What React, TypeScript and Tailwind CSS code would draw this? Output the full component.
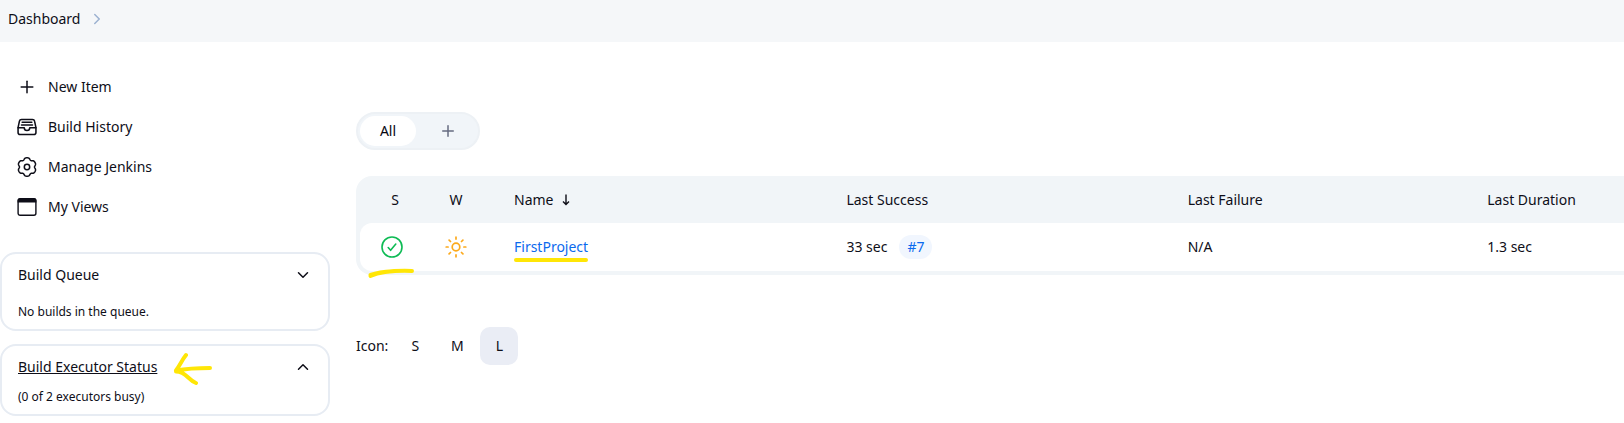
import type { ReactNode } from "react";
import { ChevronDown, ChevronRight, ChevronUp, Plus } from "lucide-react";
import { IoFileTrayFullOutline } from "react-icons/io5";

// Outline of a six-lobed gear: wide lobes with narrow notches between them.
const gearPoints = Array.from({ length: 120 }, (_, i) => {
  const t = (i / 120) * Math.PI * 2;
  const notch = (1 - Math.cos(6 * t)) / 2;
  const r = 9.2 - 1.7 * notch * notch;
  return `${(10 + r * Math.sin(t)).toFixed(2)},${(10 - r * Math.cos(t)).toFixed(2)}`;
}).join(" ");

function GearIcon() {
  return (
    <svg
      viewBox="0 0 20 20"
      className="size-5"
      fill="none"
      stroke="currentColor"
      strokeWidth="1.5"
      strokeLinejoin="round"
      aria-hidden="true"
    >
      <polygon points={gearPoints} />
      <circle cx="10" cy="10" r="2.7" />
    </svg>
  );
}

function WindowIcon() {
  return (
    <svg viewBox="0 0 20 20" className="size-5" fill="none" aria-hidden="true">
      <rect x="1.1" y="1.7" width="17.8" height="16.6" rx="2" stroke="currentColor" strokeWidth="1.4" />
      <path d="M.6 5.6V3.4A2.2 2.2 0 0 1 2.8 1.2h14.4A2.2 2.2 0 0 1 19.4 3.4v2.2Z" fill="currentColor" />
    </svg>
  );
}

function SuccessIcon() {
  return (
    <svg
      viewBox="0 0 24 24"
      className="size-6 text-[#0dbb54]"
      fill="none"
      stroke="currentColor"
      strokeWidth="1.6"
      strokeLinecap="round"
      strokeLinejoin="round"
      role="img"
      aria-label="Success"
    >
      <circle cx="12" cy="12" r="10" />
      <path d="m8.2 12.5 2.4 2.8 5.2-6.2" />
    </svg>
  );
}

function SunIcon() {
  return (
    <svg
      viewBox="0 0 24 24"
      className="size-6 text-[#fca91b]"
      fill="none"
      stroke="currentColor"
      strokeWidth="1.7"
      strokeLinecap="round"
      role="img"
      aria-label="100% stable"
    >
      <circle cx="12" cy="12" r="3.8" />
      <path d="M12 2.2v1.9M12 19.9v1.9M2.2 12h1.9M19.9 12h1.9M5.1 5.1l1.4 1.4M17.5 17.5l1.4 1.4M5.1 18.9l1.4-1.4M17.5 6.5l1.4-1.4" />
    </svg>
  );
}

function SortArrow() {
  return (
    <svg
      viewBox="0 0 8 12"
      className="h-3 w-2"
      fill="none"
      stroke="currentColor"
      strokeWidth="1.4"
      aria-hidden="true"
    >
      <path d="M4 .6v10M1 7.6l3 3 3-3" />
    </svg>
  );
}

function SideLink({ icon, children }: { icon: ReactNode; children: ReactNode }) {
  return (
    <a href="#" className="flex h-10 items-center gap-[10px] pl-4">
      <span className="flex w-[22px] items-center justify-center">{icon}</span>
      {children}
    </a>
  );
}

function Marker({ className, viewBox, d }: { className: string; viewBox: string; d: string }) {
  return (
    <svg
      className={`pointer-events-none absolute ${className}`}
      viewBox={viewBox}
      fill="none"
      stroke="#ffe606"
      strokeWidth="4"
      strokeLinecap="round"
      strokeLinejoin="round"
      aria-hidden="true"
    >
      <path d={d} />
    </svg>
  );
}

export default function App() {
  return (
    <div className="min-h-screen bg-white font-['Noto_Sans',sans-serif] text-sm leading-5 text-[#0e0e18]">
      <nav aria-label="Breadcrumb" className="flex h-[42px] items-center gap-2 bg-[#f5f7f9] px-2 pb-1">
        <a href="#">Dashboard</a>
        <ChevronRight className="size-[18px] text-[#9cb2d1]" />
      </nav>

      <div className="flex">
        <aside className="w-[330px] shrink-0 pt-[25px]">
          <nav aria-label="Tasks" className="mb-[25px]">
            <SideLink icon={<Plus className="size-5" strokeWidth={1.8} />}>New Item</SideLink>
            <SideLink icon={<IoFileTrayFullOutline className="size-[22px] [&_*]:stroke-[36px]" />}>
              Build History
            </SideLink>
            <SideLink icon={<GearIcon />}>Manage Jenkins</SideLink>
            <SideLink icon={<WindowIcon />}>My Views</SideLink>
          </nav>

          <section className="mb-[13px] rounded-2xl border-2 border-[#e7ecf3] px-4 pt-[11px] pb-2">
            <div className="flex items-center justify-between">
              <h2>Build Queue</h2>
              <button type="button" aria-label="Toggle build queue">
                <ChevronDown className="size-[18px]" />
              </button>
            </div>
            <p className="mt-[18px] text-xs leading-[18px]">No builds in the queue.</p>
          </section>

          <section className="rounded-2xl border-2 border-[#e7ecf3] px-4 pt-[11px] pb-2">
            <div className="flex items-center justify-between">
              <h2 className="relative">
                <a href="#" className="underline">
                  Build Executor Status
                </a>
                <Marker
                  className="top-[-6px] left-[154px] h-[34px] w-[42px]"
                  viewBox="0 0 42 34"
                  d="M14 4C10 9 8 14 4 19.5C15 17.5 26 17 38 17M4 20.5C14 20.5 16 29 24 32"
                />
              </h2>
              <button type="button" aria-label="Toggle executor status">
                <ChevronUp className="size-[18px]" />
              </button>
            </div>
            <p className="mt-[11px] text-xs leading-[18px]">(0 of 2 executors busy)</p>
          </section>
        </aside>

        <main className="min-w-0 flex-1 pt-[70px] pl-[26px]">
          <div className="flex h-[38px] w-[124px] rounded-full border-2 border-[#edf1f5] bg-[#f1f5f9] p-[2px]">
            <a href="#" className="flex w-14 items-center justify-center rounded-full bg-white text-[#060611]">
              All
            </a>
            <a href="#" aria-label="New view" className="flex flex-1 items-center justify-center pl-1 text-[#666b80]">
              <Plus className="size-[18px]" />
            </a>
          </div>

          <div className="mt-[26px] rounded-l-2xl bg-[#f1f5f8] pb-1 pl-1">
            <table className="w-full table-fixed border-separate border-spacing-0 text-left">
              <colgroup>
                <col className="w-16" />
                <col className="w-16" />
                <col className="w-[26.3%]" />
                <col className="w-[27%]" />
                <col className="w-[23.7%]" />
                <col />
              </colgroup>
              <thead>
                <tr className="h-[47px]">
                  <th className="pl-[6px] text-center font-normal">S</th>
                  <th className="text-center font-normal">W</th>
                  <th className="pl-[26px] font-normal">
                    <span className="flex items-center gap-[9px]">
                      Name
                      <SortArrow />
                    </span>
                  </th>
                  <th className="pl-[26px] font-normal">Last Success</th>
                  <th className="pl-[26px] font-normal">Last Failure</th>
                  <th className="pl-[26px] font-normal">Last Duration</th>
                </tr>
              </thead>
              <tbody>
                <tr className="h-12">
                  <td className="rounded-l-xl bg-white">
                    <div className="relative flex justify-center">
                      <SuccessIcon />
                      <Marker
                        className="top-[32px] left-[7px] h-[14px] w-[48px]"
                        viewBox="0 0 48 14"
                        d="M3.5 9C15 4 30 3.5 45 4M3.5 8C13 4.5 19 4.5 28 4"
                      />
                    </div>
                  </td>
                  <td className="bg-white">
                    <div className="flex justify-center">
                      <SunIcon />
                    </div>
                  </td>
                  <td className="bg-white pl-[26px]">
                    <a href="#" className="relative inline-block text-[#0b6aee]">
                      FirstProject
                      <Marker className="top-[21px] left-0 h-1 w-[74px]" viewBox="0 0 74 4" d="M2 2H72" />
                    </a>
                  </td>
                  <td className="bg-white pl-[26px]">
                    33 sec
                    <a href="#" className="ml-3 inline-block rounded-full bg-[#f1f6fe] px-2 py-[2px] text-[#0b6aee]">
                      #7
                    </a>
                  </td>
                  <td className="bg-white pl-[26px]">N/A</td>
                  <td className="bg-white pl-[26px]">1.3 sec</td>
                </tr>
              </tbody>
            </table>
          </div>

          <div className="mt-[52px] flex items-center">
            <span className="mr-2">Icon:</span>
            <div className="flex gap-1">
              <button type="button" className="size-[38px]">
                S
              </button>
              <button type="button" className="size-[38px]">
                M
              </button>
              <button type="button" aria-pressed="true" className="size-[38px] rounded-[10px] bg-[#eaedf5]">
                L
              </button>
            </div>
          </div>
        </main>
      </div>
    </div>
  );
}
